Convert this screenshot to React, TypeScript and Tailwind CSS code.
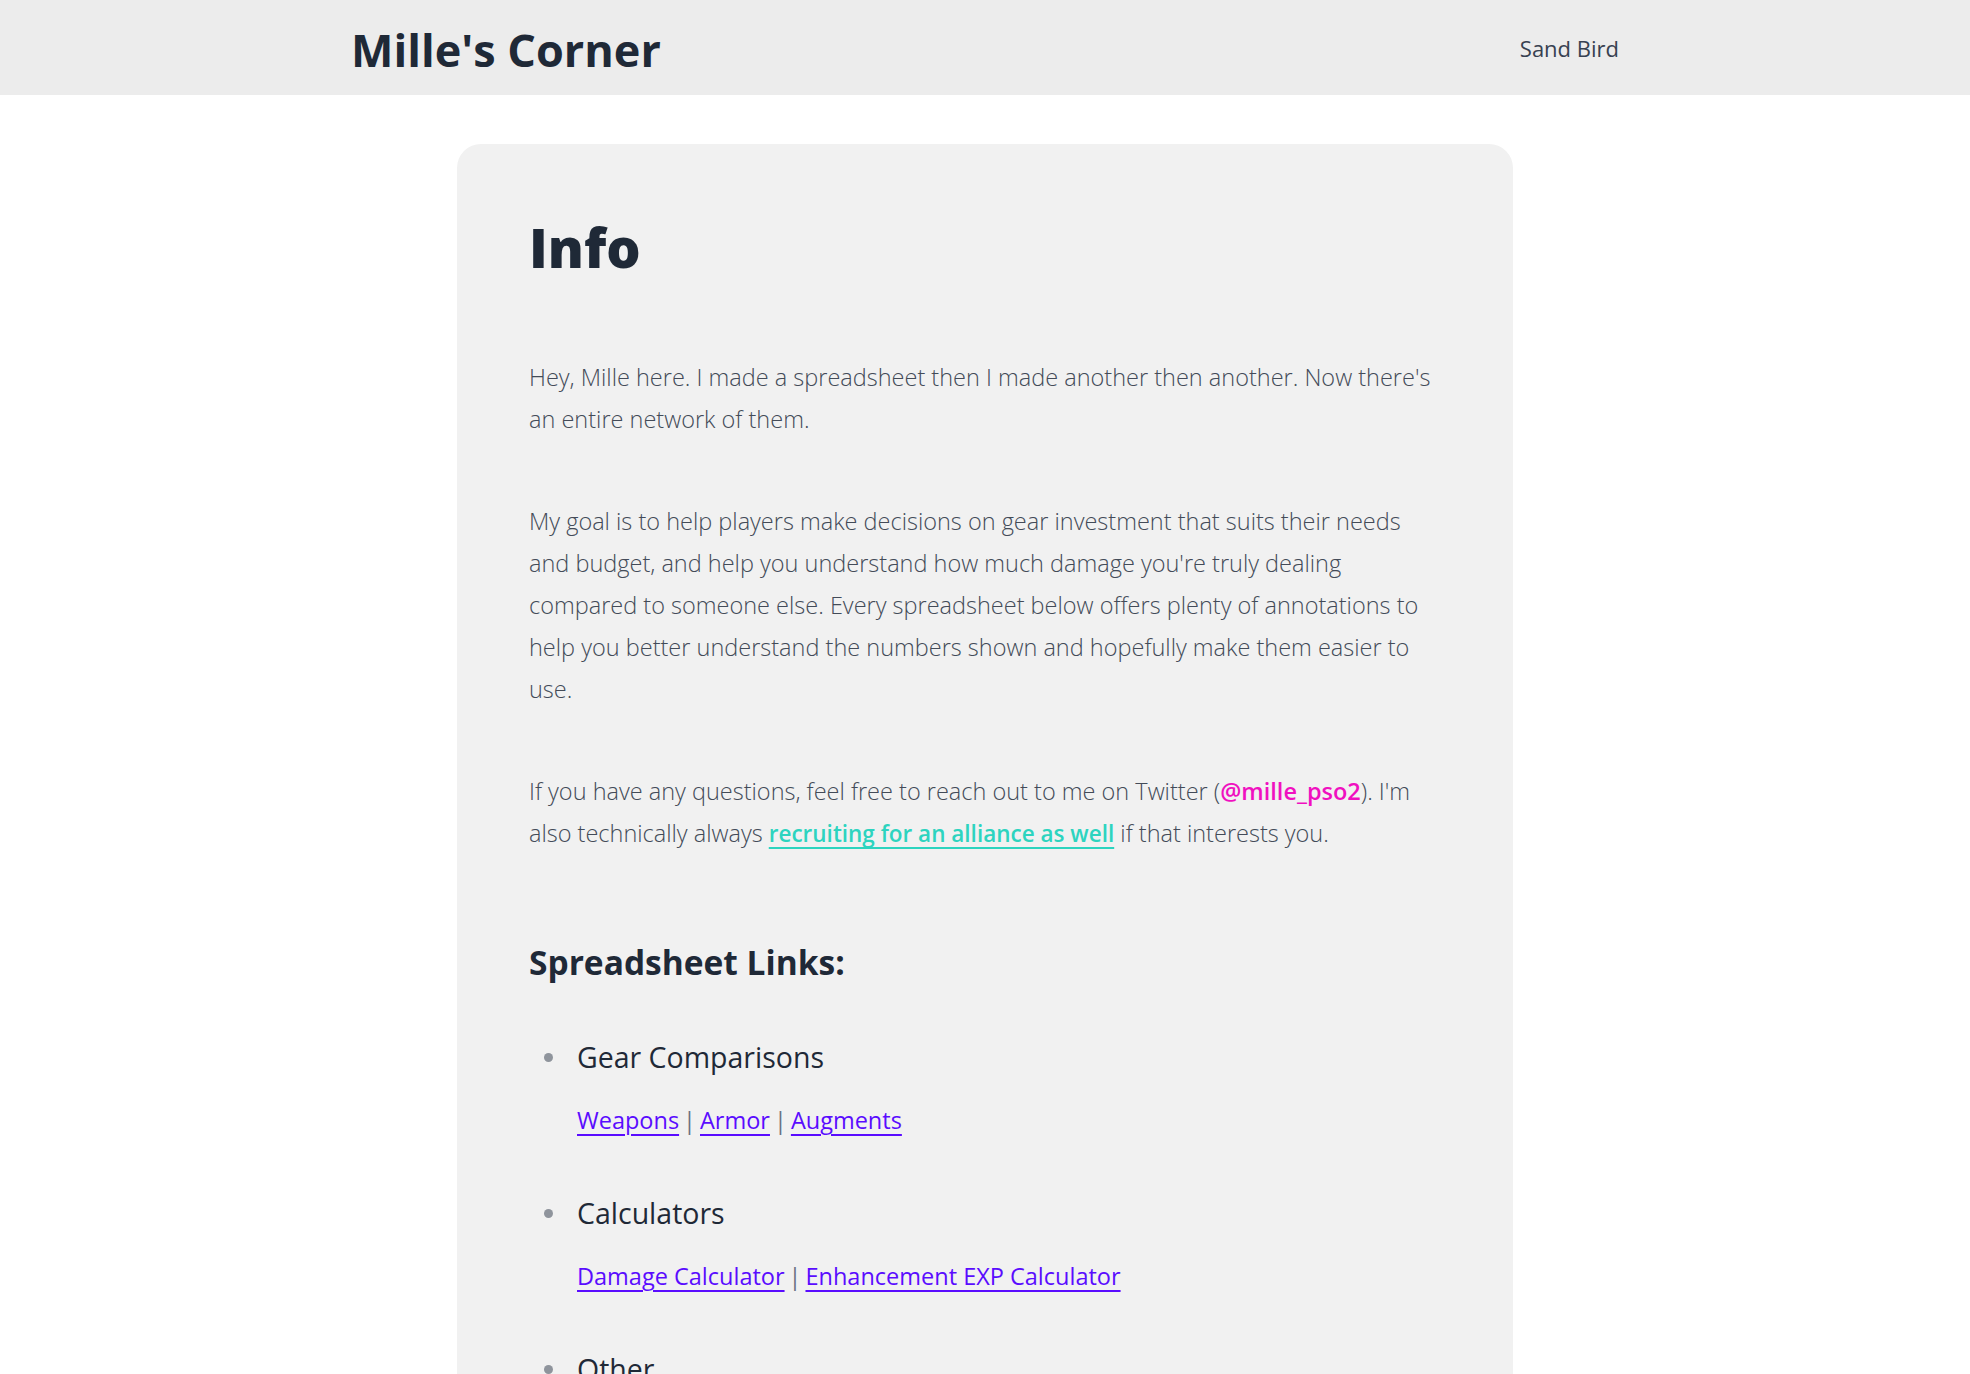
const links = {
  gear: ['Weapons', 'Armor', 'Augments'],
  calc: ['Damage Calculator', 'Enhancement EXP Calculator'],
};

const LinkRow = ({ items }: { items: string[] }) => (
  <p className="mt-[22px] text-[23.5px] leading-[40px]">
    {items.map((item, i) => (
      <span key={item}>
        {i > 0 && <span className="mx-[4px] text-gray-500">|</span>}
        <a href="#" className="text-[#5a0cff] underline underline-offset-[5px] decoration-[2px]">
          {item}
        </a>
      </span>
    ))}
  </p>
);

const Bullet = () => (
  <span className="absolute -left-[33px] top-[17px] w-[9px] h-[9px] rounded-full bg-[#8f949c]" />
);

const App = () => {
  return (
    <div className="min-h-screen bg-white font-['Open_Sans',sans-serif]">
      <header className="bg-[#ececec]">
        <div className="max-w-[1280px] mx-auto px-[6px] h-[95px] flex items-center justify-between">
          <h1 className="mt-[4px] text-[45px] font-bold text-[#1f2937]">Mille's Corner</h1>
          <a href="#" className="mt-[2px] text-[22px] text-[#374151]">Sand Bird</a>
        </div>
      </header>

      <main className="pt-[49px] pb-16">
        <div className="w-[1056px] mx-auto rounded-3xl bg-[#f1f1f1] px-[72px] pt-[76px] pb-16">
          <h2 className="text-[54px] leading-none font-extrabold text-[#1f2937] mb-[82px]">Info</h2>

          <div className="text-[23.5px] leading-[42px] font-[350] text-[#434b58] space-y-[60px]">
            <p>
              Hey, Mille here. I made a spreadsheet then I made another then another. Now there's an entire network of
              them.
            </p>
            <p>
              My goal is to help players make decisions on gear investment that suits their needs and budget, and help
              you understand how much damage you're truly dealing compared to someone else. Every spreadsheet below
              offers plenty of annotations to help you better understand the numbers shown and hopefully make them
              easier to use.
            </p>
            <p>
              If you have any questions, feel free to reach out to me on Twitter (
              <a href="#" className="font-semibold text-[#f010c0]">@mille_pso2</a>). I'm also technically always{' '}
              <a
                href="#"
                className="font-semibold text-[22.5px] text-[#2dd4bf] underline underline-offset-[5px] decoration-[2px]"
              >
                recruiting for an alliance as well
              </a>{' '}
              if that interests you.
            </p>
          </div>

          <h3 className="mt-[85px] text-[33.5px] leading-[44px] font-bold text-[#1f2937]">Spreadsheet Links:</h3>

          <ul className="mt-[52px] pl-[48px] space-y-[52px]">
            <li className="relative">
              <Bullet />
              <p className="text-[28.5px] leading-[42px] font-medium text-[#1f2937]">Gear Comparisons</p>
              <LinkRow items={links.gear} />
            </li>
            <li className="relative">
              <Bullet />
              <p className="text-[28.5px] leading-[42px] font-medium text-[#1f2937]">Calculators</p>
              <LinkRow items={links.calc} />
            </li>
            <li className="relative">
              <Bullet />
              <p className="text-[28.5px] leading-[42px] font-medium text-[#1f2937]">Other</p>
            </li>
          </ul>
        </div>
      </main>
    </div>
  );
};

export default App;
